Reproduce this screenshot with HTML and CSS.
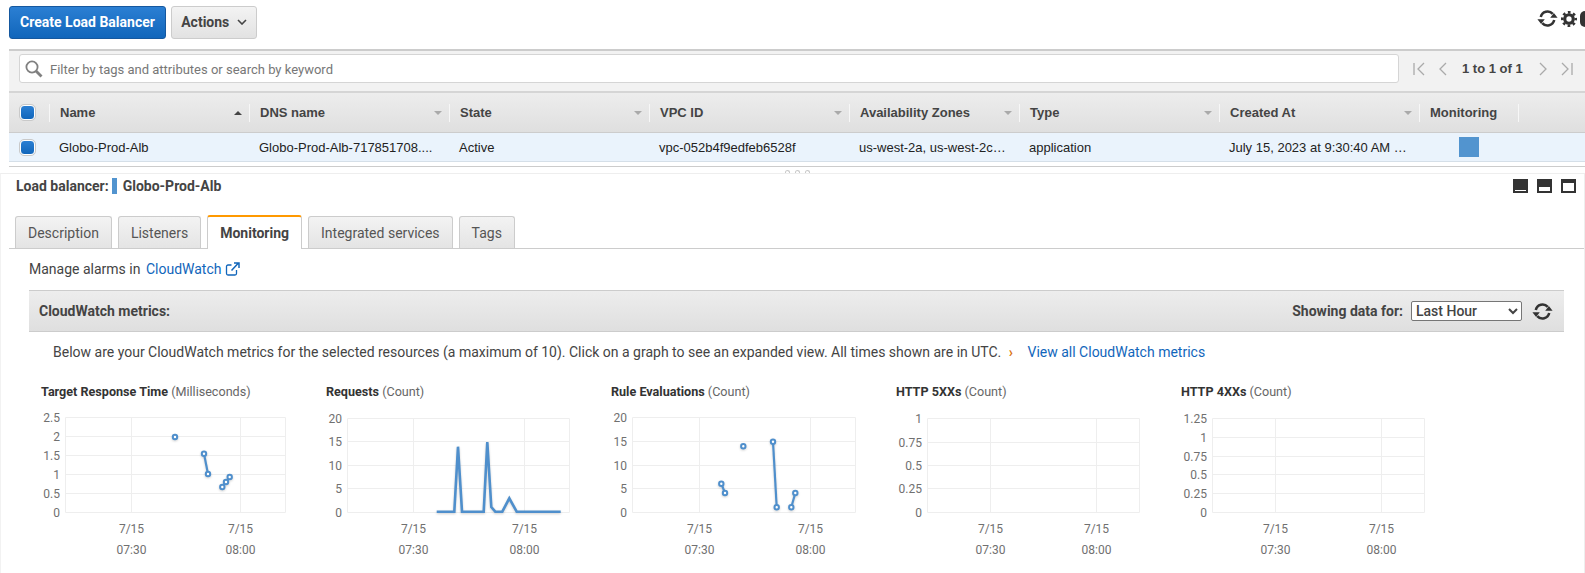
FILE: index.html
```html
<!DOCTYPE html>
<html lang="en">
<head>
    <meta charset="UTF-8">
    <meta name="viewport" content="width=device-width, initial-scale=1.0">
    <title>Load Balancers</title>
    <link rel="stylesheet" href="styles.css">
</head>
<body>
    <!-- icons used more than once -->
    <svg class="sprites" width="0" height="0">
        <defs>
            <symbol id="refresh" viewBox="0 0 20 20">
                <path d="M3.600 8.600A6.600 6.600 0 0 1 15 5.600" fill="none" stroke="currentColor" stroke-width="2.400"/>
                <path d="M16.400 11.400A6.600 6.600 0 0 1 5 14.400" fill="none" stroke="currentColor" stroke-width="2.400"/>
                <path d="M12.600 9.400h7l-3.500-4.600zM.4 10.600h7l-3.500 4.600z" fill="currentColor"/>
            </symbol>
            <symbol id="sort" viewBox="0 0 8 4">
                <path d="M0 0h8L4 4z" fill="currentColor"/>
            </symbol>
        </defs>
    </svg>

    <div class="toolbar">
        <button class="btn btn-primary">Create Load Balancer</button>
        <button class="btn btn-actions">Actions
            <svg class="chevron" width="10" height="6" viewBox="0 0 10 6"><path d="M1 1l4 4 4-4" fill="none" stroke="currentColor" stroke-width="1.600"/></svg>
        </button>
        <div class="toolbar-icons">
            <svg class="icon-refresh" width="21" height="21"><use href="#refresh"/></svg>
            <svg width="16" height="16" viewBox="0 0 15 15"><circle cx="7.500" cy="7.500" r="4" fill="none" stroke="#333" stroke-width="3"/><circle cx="7.500" cy="7.500" r="6.300" fill="none" stroke="#333" stroke-width="2.400" stroke-dasharray="2.500 2.450" stroke-dashoffset="1.250"/></svg>
            <span class="help-clip"></span>
        </div>
    </div>

    <section class="grid-panel">
        <div class="filter-bar">
            <div class="filter-input">
                <svg width="18" height="18" viewBox="0 0 18 18"><circle cx="7" cy="7" r="5.600" fill="none" stroke="#808080" stroke-width="1.800"/><path d="M11 11l5.500 5.500" stroke="#808080" stroke-width="2.800"/></svg>
                <span class="filter-text">Filter by tags and attributes or search by keyword</span>
            </div>
            <div class="pager">
                <svg width="12" height="14" viewBox="0 0 12 14"><path d="M1 1v12M11 1L5 7l6 6" fill="none" stroke="#aaa" stroke-width="1.300"/></svg>
                <svg width="9" height="14" viewBox="0 0 9 14"><path d="M8 1L2 7l6 6" fill="none" stroke="#aaa" stroke-width="1.300"/></svg>
                <span class="pager-text">1 to 1 of 1</span>
                <svg width="9" height="14" viewBox="0 0 9 14"><path d="M1 1l6 6-6 6" fill="none" stroke="#aaa" stroke-width="1.300"/></svg>
                <svg width="12" height="14" viewBox="0 0 12 14"><path d="M11 1v12M1 1l6 6-6 6" fill="none" stroke="#aaa" stroke-width="1.300"/></svg>
            </div>
        </div>

        <div class="table-head table-cols">
            <div class="cell-check"><span class="checkbox"></span></div>
            <div class="th">Name<svg class="sort sort-up" width="8" height="4"><use href="#sort"/></svg></div>
            <div class="th">DNS name<svg class="sort" width="8" height="4"><use href="#sort"/></svg></div>
            <div class="th">State<svg class="sort" width="8" height="4"><use href="#sort"/></svg></div>
            <div class="th">VPC ID<svg class="sort" width="8" height="4"><use href="#sort"/></svg></div>
            <div class="th">Availability Zones<svg class="sort" width="8" height="4"><use href="#sort"/></svg></div>
            <div class="th">Type<svg class="sort" width="8" height="4"><use href="#sort"/></svg></div>
            <div class="th">Created At<svg class="sort" width="8" height="4"><use href="#sort"/></svg></div>
            <div class="th">Monitoring</div>
        </div>
        <div class="table-row table-cols">
            <div class="cell-check"><span class="checkbox"></span></div>
            <div class="td">Globo-Prod-Alb</div>
            <div class="td">Globo-Prod-Alb-717851708....</div>
            <div class="td">Active</div>
            <div class="td">vpc-052b4f9edfeb6528f</div>
            <div class="td">us-west-2a, us-west-2c…</div>
            <div class="td">application</div>
            <div class="td">July 15, 2023 at 9:30:40 AM …</div>
            <div class="td td-monitor"><span class="monitor-swatch"></span></div>
        </div>
    </section>

    <div class="splitter"><span></span><span></span><span></span></div>

    <section class="detail">
        <div class="detail-head">
            <div class="detail-title">Load balancer:<span class="title-swatch"></span>Globo-Prod-Alb</div>
            <div class="pane-icons">
                <span class="pane pane-low"></span>
                <span class="pane pane-mid"></span>
                <span class="pane pane-high"></span>
            </div>
        </div>

        <div class="tabs">
            <div class="tab">Description</div>
            <div class="tab">Listeners</div>
            <div class="tab tab-active">Monitoring</div>
            <div class="tab">Integrated services</div>
            <div class="tab">Tags</div>
        </div>

        <div class="tab-body">
            <p class="alarms">Manage alarms in <a href="#">CloudWatch
                <svg width="15" height="14" viewBox="0 0 14 14"><path d="M6 3H2.500A1.500 1.500 0 0 0 1 4.500v7A1.500 1.500 0 0 0 2.500 13h7a1.500 1.500 0 0 0 1.500-1.500V8" fill="none" stroke="currentColor" stroke-width="1.300"/><path d="M6 8.500L12.500 1.500M8.500 1h5v5" fill="none" stroke="currentColor" stroke-width="1.500"/></svg>
            </a></p>

            <div class="metrics-bar">
                <strong>CloudWatch metrics:</strong>
                <div class="metrics-controls">
                    <strong>Showing data for:</strong>
                    <select class="range"><option>Last Hour</option></select>
                    <svg class="icon-refresh" width="21" height="21"><use href="#refresh"/></svg>
                </div>
            </div>

            <p class="intro">Below are your CloudWatch metrics for the selected resources (a maximum of 10). Click on a graph to see an expanded view. All times shown are in UTC. <span class="caret">›</span> <a href="#">View all CloudWatch metrics</a></p>

            <div class="charts">
                <div class="chart">
                    <h4>Target Response Time <span>(Milliseconds)</span></h4>
                    <svg width="285" height="155" viewBox="0 0 285 155">
                        <g class="grid">
                            <path d="M24.500 7.500h220v95h-220zM24.500 26.500h220M24.500 45.500h220M24.500 64.500h220M24.500 83.500h220M90.500 7.500v95M199.500 7.500v95"/>
                        </g>
                        <g class="y-ticks">
                            <text x="19" y="12">2.5</text><text x="19" y="31">2</text><text x="19" y="50">1.5</text><text x="19" y="69">1</text><text x="19" y="88">0.5</text><text x="19" y="107">0</text>
                        </g>
                        <g class="x-ticks">
                            <text x="90.500" y="122.500">7/15</text><text x="90.500" y="143.500">07:30</text><text x="199.500" y="122.500">7/15</text><text x="199.500" y="143.500">08:00</text>
                        </g>
                        <g class="series">
                            <polyline class="line" points="163,43.700 167,64"/>
                            <polyline class="line" points="181.300,77 185,72 188.700,67"/>
                            <g class="dots">
                                <circle cx="134" cy="27" r="2.200"/><circle cx="163" cy="43.700" r="2.200"/><circle cx="167" cy="64" r="2.200"/><circle cx="181.300" cy="77" r="2.200"/><circle cx="185" cy="72" r="2.200"/><circle cx="188.700" cy="67" r="2.200"/>
                            </g>
                        </g>
                    </svg>
                </div>
                <div class="chart">
                    <h4>Requests <span>(Count)</span></h4>
                    <svg width="285" height="155" viewBox="0 0 285 155">
                        <g class="grid">
                            <path d="M21.500 8.500h222v94h-222zM21.500 31.500h222M21.500 55.500h222M21.500 78.500h222M87.500 8.500v94M198.500 8.500v94"/>
                        </g>
                        <g class="y-ticks">
                            <text x="16" y="13">20</text><text x="16" y="36">15</text><text x="16" y="60">10</text><text x="16" y="83">5</text><text x="16" y="107">0</text>
                        </g>
                        <g class="x-ticks">
                            <text x="87.500" y="122.500">7/15</text><text x="87.500" y="143.500">07:30</text><text x="198.500" y="122.500">7/15</text><text x="198.500" y="143.500">08:00</text>
                        </g>
                        <g class="series">
                            <polyline class="line line-area" points="110.700,101.700 128.300,101.700 132,36.700 136,101.700 157.700,101.700 161.300,32 165.300,97 169.300,101.700 176.300,101.700 183.300,88.300 190.700,101.700 234.700,101.700"/>
                        </g>
                    </svg>
                </div>
                <div class="chart">
                    <h4>Rule Evaluations <span>(Count)</span></h4>
                    <svg width="285" height="155" viewBox="0 0 285 155">
                        <g class="grid">
                            <path d="M21.500 7.500h223v95h-223zM21.500 31.500h223M21.500 55.500h223M21.500 78.500h223M88.500 7.500v95M199.500 7.500v95"/>
                        </g>
                        <g class="y-ticks">
                            <text x="16" y="12">20</text><text x="16" y="36">15</text><text x="16" y="60">10</text><text x="16" y="83">5</text><text x="16" y="107">0</text>
                        </g>
                        <g class="x-ticks">
                            <text x="88.500" y="122.500">7/15</text><text x="88.500" y="143.500">07:30</text><text x="199.500" y="122.500">7/15</text><text x="199.500" y="143.500">08:00</text>
                        </g>
                        <g class="series">
                            <polyline class="line" points="110.300,73.700 114,83"/>
                            <polyline class="line" points="162,31.700 165.700,97.300"/>
                            <polyline class="line" points="180.300,97.300 184.300,83"/>
                            <g class="dots">
                                <circle cx="110.300" cy="73.700" r="2.200"/><circle cx="114" cy="83" r="2.200"/><circle cx="132.300" cy="36.300" r="2.200"/><circle cx="162" cy="31.700" r="2.200"/><circle cx="165.700" cy="97.300" r="2.200"/><circle cx="180.300" cy="97.300" r="2.200"/><circle cx="184.300" cy="83" r="2.200"/>
                            </g>
                        </g>
                    </svg>
                </div>
                <div class="chart">
                    <h4>HTTP 5XXs <span>(Count)</span></h4>
                    <svg width="285" height="155" viewBox="0 0 285 155">
                        <g class="grid">
                            <path d="M31.500 8.500h212v94h-212zM31.500 32.500h212M31.500 55.500h212M31.500 78.500h212M94.500 8.500v94M200.500 8.500v94"/>
                        </g>
                        <g class="y-ticks">
                            <text x="26" y="13">1</text><text x="26" y="37">0.75</text><text x="26" y="60">0.5</text><text x="26" y="83">0.25</text><text x="26" y="107">0</text>
                        </g>
                        <g class="x-ticks">
                            <text x="94.500" y="122.500">7/15</text><text x="94.500" y="143.500">07:30</text><text x="200.500" y="122.500">7/15</text><text x="200.500" y="143.500">08:00</text>
                        </g>
                    </svg>
                </div>
                <div class="chart">
                    <h4>HTTP 4XXs <span>(Count)</span></h4>
                    <svg width="285" height="155" viewBox="0 0 285 155">
                        <g class="grid">
                            <path d="M31.500 8.500h212v94h-212zM31.500 27.500h212M31.500 46.500h212M31.500 64.500h212M31.500 83.500h212M94.500 8.500v94M200.500 8.500v94"/>
                        </g>
                        <g class="y-ticks">
                            <text x="26" y="13">1.25</text><text x="26" y="32">1</text><text x="26" y="51">0.75</text><text x="26" y="69">0.5</text><text x="26" y="88">0.25</text><text x="26" y="107">0</text>
                        </g>
                        <g class="x-ticks">
                            <text x="94.500" y="122.500">7/15</text><text x="94.500" y="143.500">07:30</text><text x="200.500" y="122.500">7/15</text><text x="200.500" y="143.500">08:00</text>
                        </g>
                    </svg>
                </div>
            </div>
        </div>
    </section>
</body>
</html>
```

FILE: styles.css
```css
html, body {
    height: 573px;
    overflow: hidden;
}
body {
    margin: 0;
    font-family: Roboto, "Liberation Sans", sans-serif;
    font-size: 14px;
    color: #444;
    background-color: #fff;
}
.sprites {
    display: block;
    height: 0;
}
p {
    margin: 0;
}
a {
    color: #1166bb;
    text-decoration: none;
}

/* top toolbar */
.toolbar {
    display: flex;
    align-items: flex-start;
    gap: 5px;
    height: 49px;
    padding: 6px 0 0 9px;
    box-sizing: border-box;
}
.btn {
    height: 33px;
    padding: 0 0 2px;
    font-family: Roboto, sans-serif;
    font-size: 14px;
    font-weight: 700;
    white-space: nowrap;
    border-radius: 3px;
    cursor: pointer;
}
.btn-primary {
    width: 157px;
    color: #fff;
    border: 1px solid #15589f;
    background: linear-gradient(#2b7fd3, #1166bb);
}
.btn-actions {
    width: 86px;
    color: #444;
    border: 1px solid #ccc;
    background: linear-gradient(#f3f3f3, #e2e2e2);
}
.chevron {
    margin-left: 4px;
    vertical-align: 2px;
}
.toolbar-icons {
    margin-left: auto;
    display: flex;
    align-items: center;
    gap: 3px;
    margin-top: 2px;
    color: #333;
}
.help-clip {
    width: 5px;
    height: 16px;
    background-color: #333;
    border-radius: 5px 0 0 5px;
}

/* table */
.grid-panel {
    margin-left: 9px;
    padding-bottom: 4px;
    border-bottom: 1px solid #ccc;
}
.filter-bar {
    display: flex;
    align-items: flex-start;
    height: 42px;
    box-sizing: border-box;
    border-top: 2px solid #ccc;
    padding: 3px 0 0 10px;
    background-color: #f2f2f2;
}
.filter-input {
    display: flex;
    align-items: center;
    gap: 7px;
    width: 1380px;
    height: 29px;
    padding-left: 5px;
    box-sizing: border-box;
    border: 1px solid #d5d5d5;
    border-radius: 3px;
    background-color: #fff;
    font-size: 13px;
    color: #777;
}
.filter-text {
    padding-top: 1px;
}
.pager {
    display: flex;
    align-items: center;
    height: 29px;
    margin-left: 14px;
    gap: 13px;
}
.pager-text {
    margin: 0 3px 0 2px;
    font-family: "Liberation Sans", sans-serif;
    font-size: 13px;
    font-weight: 700;
    color: #444;
}
.table-cols {
    display: grid;
    grid-template-columns: 40px 200px 200px 200px 200px 170px 200px 200px 100px;
}
.table-head {
    height: 42px;
    align-items: center;
    border-top: 2px solid #d5d5d5;
    border-bottom: 1px solid #ccc;
    box-sizing: border-box;
    background: linear-gradient(#ededed, #dfdfdf);
    font-family: "Liberation Sans", sans-serif;
    font-size: 13px;
    font-weight: 700;
}
.cell-check {
    display: flex;
    padding-left: 11px;
}
.checkbox {
    width: 13px;
    height: 13px;
    border: 1px solid #fff;
    outline: 1px solid #c9c9c9;
    border-radius: 4px;
    background: linear-gradient(#2b7fd3, #1166bb);
}
.th {
    display: flex;
    align-items: center;
    justify-content: space-between;
    height: 18px;
    padding: 0 7px 0 10px;
    border-left: 1px solid #f7f7f7;
    box-sizing: border-box;
}
.th:last-child {
    border-right: 1px solid #f7f7f7;
}
.sort {
    color: #aaa;
    flex: none;
}
.sort-up {
    color: #444;
    transform: rotate(180deg);
}
.table-row {
    height: 29px;
    align-items: center;
    border-bottom: 1px solid #d5dfe8;
    box-sizing: border-box;
    background-color: #eaf3fc;
    font-family: "Liberation Sans", sans-serif;
    font-size: 13px;
    color: #222;
}
.td {
    padding-left: 10px;
    white-space: nowrap;
}
.td-monitor {
    display: flex;
    padding-left: 40px;
}
.monitor-swatch {
    width: 20px;
    height: 20px;
    background-color: #5294cf;
}
.splitter {
    display: flex;
    justify-content: center;
    align-items: flex-end;
    gap: 5px;
    height: 6px;
    margin-left: 9px;
}
.splitter span {
    width: 5px;
    height: 3px;
    border: 1px solid #c9c9c9;
    border-bottom: none;
    border-radius: 3px 3px 0 0;
    box-sizing: border-box;
}

/* detail pane */
.detail {
    height: 400px;
    box-sizing: border-box;
    border-top: 1px solid #eee;
    border-left: 1px solid #f2f2f2;
    border-right: 1px solid #eee;
}
.detail-head {
    display: flex;
    align-items: center;
    justify-content: space-between;
    height: 24px;
    padding: 0 8px 0 15px;
}
.detail-title {
    font-weight: 700;
    font-size: 14px;
    display: flex;
    align-items: center;
}
.title-swatch {
    width: 5px;
    height: 16px;
    margin: 0 6px 0 3px;
    background-color: #5294cf;
}
.pane-icons {
    display: flex;
    gap: 9px;
}
.pane {
    width: 15px;
    height: 14px;
    background-color: #333;
    position: relative;
}
.pane::after {
    content: "";
    position: absolute;
    left: 2px;
    right: 2px;
    background-color: #fff;
}
.pane-low::after {
    bottom: 2px;
    height: 1px;
}
.pane-mid::after {
    bottom: 2px;
    height: 4px;
}
.pane-high::after {
    bottom: 2px;
    height: 8px;
}
.tabs {
    display: flex;
    align-items: flex-end;
    gap: 6px;
    height: 34px;
    box-sizing: border-box;
    margin-top: 17px;
    margin-left: 8px;
    padding-left: 6px;
    border-bottom: 1px solid #ccc;
}
.tab {
    display: flex;
    align-items: center;
    height: 32px;
    box-sizing: border-box;
    padding: 0 12px;
    border: 1px solid #ccc;
    border-bottom: none;
    border-radius: 3px 3px 0 0;
    background: linear-gradient(#f3f3f3, #e4e4e4);
    color: #555;
}
.tab-active {
    height: 34px;
    margin-bottom: -1px;
    border-top: 2px solid #ff9900;
    background: #fff;
    font-weight: 700;
    color: #444;
}
.tab-body {
    padding: 0 20px 0 28px;
}
.alarms {
    height: 41px;
    line-height: 40px;
    color: #444;
}
.alarms a {
    margin-left: 2px;
}
.alarms svg {
    vertical-align: -2px;
}
.metrics-bar {
    display: flex;
    align-items: center;
    justify-content: space-between;
    height: 42px;
    padding: 0 11px 0 10px;
    box-sizing: border-box;
    border-top: 1px solid #ccc;
    border-bottom: 1px solid #ccc;
    background: linear-gradient(#ededed, #dfdfdf);
}
.metrics-controls {
    display: flex;
    align-items: center;
    gap: 8px;
}
.range {
    width: 111px;
    height: 20px;
    padding-left: 0;
    font-family: Roboto, sans-serif;
    font-size: 14px;
    font-weight: 500;
    color: #444;
    background-color: #fff;
    border: 1px solid #767676;
    border-radius: 2px;
}
.metrics-controls .icon-refresh {
    margin-left: 2px;
    color: #333;
}
.intro {
    height: 51px;
    box-sizing: border-box;
    padding: 12px 0 0 24px;
    line-height: 16px;
    white-space: nowrap;
    color: #444;
}
.caret {
    font-weight: 700;
    color: #d9730d;
    margin: 0 11px 0 4px;
}

/* charts */
.charts {
    display: flex;
    margin-left: 12px;
}
.chart {
    width: 285px;
    flex: none;
}
.chart h4 {
    margin: 0 0 9px;
    height: 18px;
    line-height: 18px;
    font-size: 12.600px;
    font-weight: 700;
    color: #333;
}
.chart h4 span {
    font-weight: 400;
    color: #666;
}
.chart svg {
    display: block;
}
.grid path {
    fill: none;
    stroke: #eee;
    stroke-width: 1;
}
.y-ticks text {
    font-size: 12px;
    fill: #707070;
    text-anchor: end;
}
.x-ticks text {
    font-size: 12px;
    fill: #707070;
    text-anchor: middle;
}
.series {
    filter: drop-shadow(0 1px 1px rgba(0, 0, 0, 0.18));
}
.line {
    fill: none;
    stroke: #4f8fcc;
    stroke-width: 2.200;
}
.line-area {
    stroke-width: 2.600;
}
.dots circle {
    fill: #fff;
    stroke: #4f8fcc;
    stroke-width: 2;
}
```
